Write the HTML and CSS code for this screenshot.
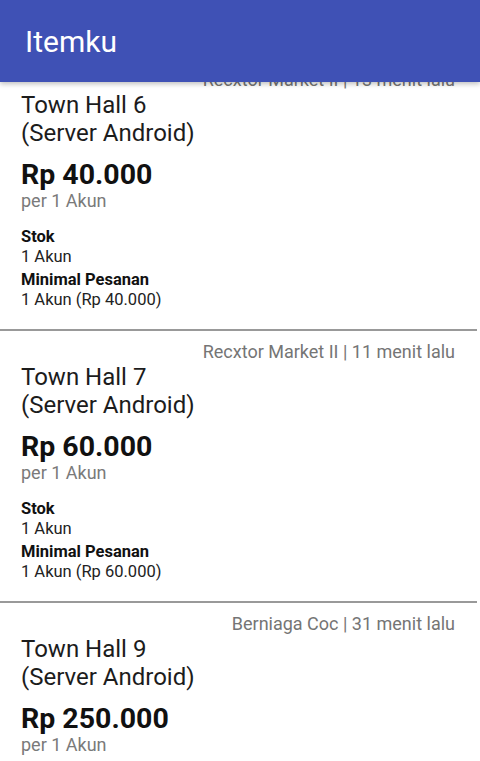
FILE: index.html
```html
<!DOCTYPE html>
<html lang="id">
<head>
  <meta charset="UTF-8" />
  <meta name="viewport" content="width=device-width, initial-scale=1.0" />
  <title>Itemku</title>
  <link rel="stylesheet" href="styles.css">
</head>
<body>
  <div class="app-bar">Itemku</div>

  <div class="list">
    <div class="card">
      <div class="meta">Recxtor Market II | 13 menit lalu</div>
      <div class="title">Town Hall 6<br>(Server Android)</div>
      <div class="price">Rp 40.000</div>
      <div class="unit">per 1 Akun</div>
      <div class="label">Stok</div>
      <div class="value">1 Akun</div>
      <div class="label label-min">Minimal Pesanan</div>
      <div class="value">1 Akun (Rp 40.000)</div>
    </div>

    <div class="card">
      <div class="meta">Recxtor Market II | 11 menit lalu</div>
      <div class="title">Town Hall 7<br>(Server Android)</div>
      <div class="price">Rp 60.000</div>
      <div class="unit">per 1 Akun</div>
      <div class="label">Stok</div>
      <div class="value">1 Akun</div>
      <div class="label label-min">Minimal Pesanan</div>
      <div class="value">1 Akun (Rp 60.000)</div>
    </div>

    <div class="card">
      <div class="meta">Berniaga Coc | 31 menit lalu</div>
      <div class="title">Town Hall 9<br>(Server Android)</div>
      <div class="price">Rp 250.000</div>
      <div class="unit">per 1 Akun</div>
    </div>
  </div>
</body>
</html>
```

FILE: styles.css
```css
body {
  margin: 0;
  font-family: Roboto, "Noto Sans", sans-serif;
  background: #fff;
  color: #212121;
  overflow: hidden;
}

.app-bar {
  position: relative;
  z-index: 2;
  height: 82px;
  line-height: 84px;
  padding-left: 25px;
  background: #3f51b5;
  color: #fff;
  font-size: 30px;
  box-shadow: 0 2px 5px rgba(0,0,0,0.25);
}

.list {
  margin-top: -23px;
}

.card {
  padding: 11px 22px 19px 21px;
  margin-right: 3px;
  border-bottom: 2px solid #999;
}

.meta {
  text-align: right;
  font-size: 18px;
  line-height: 20px;
  color: #757575;
}

.title {
  margin-top: 1px;
  font-size: 24px;
  line-height: 28px;
  color: #1c1c1c;
}

.price {
  margin-top: 12px;
  font-size: 28.5px;
  line-height: 32px;
  font-weight: bold;
  color: #111;
}

.unit {
  font-size: 18px;
  line-height: 20px;
  color: #7a7a7a;
}

.label {
  margin-top: 16px;
  font-size: 16.5px;
  line-height: 20px;
  font-weight: bold;
  color: #111;
}

.label-min {
  margin-top: 3px;
}

.value {
  font-size: 16.5px;
  line-height: 20px;
  color: #222;
}
```
